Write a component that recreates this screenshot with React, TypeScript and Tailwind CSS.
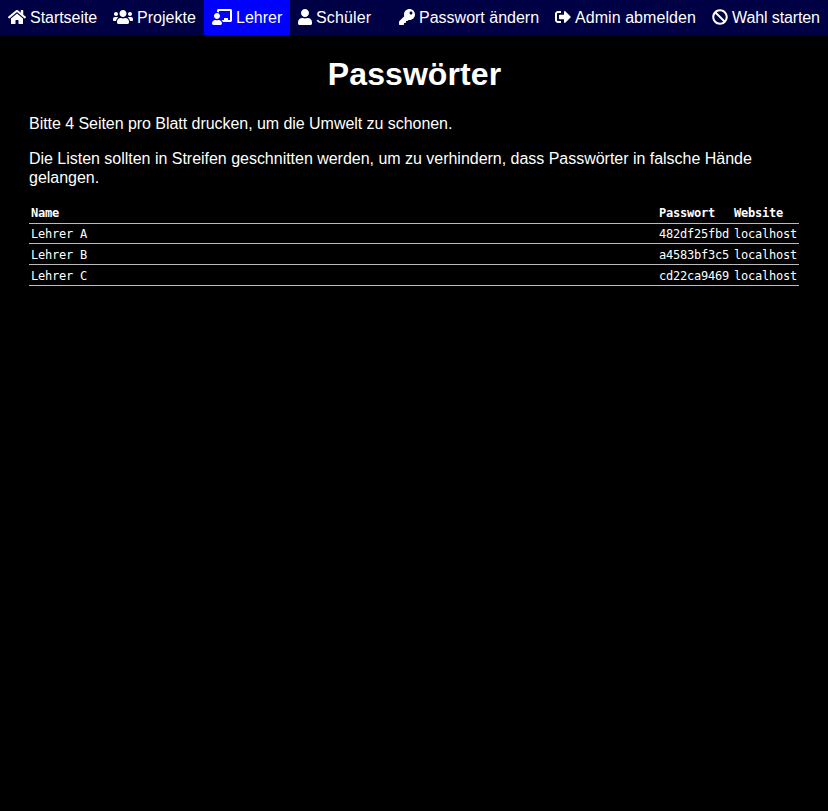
import React from "react";
import { FaHome, FaUsers, FaChalkboardTeacher, FaUser, FaKey, FaSignOutAlt, FaBan } from "react-icons/fa";

type Item = { label: string; icon: React.ReactNode; size: string; active?: boolean };

const left: Item[] = [
  { label: "Startseite", size: "w-[105px] tracking-[-0.04px]", icon: <FaHome className="mb-px block h-4 w-[18px] shrink-0" /> },
  { label: "Projekte", size: "w-[99px] tracking-[0.03px]", icon: <FaUsers className="mb-px block h-4 w-5 shrink-0" /> },
  { label: "Lehrer", size: "w-[86px]", icon: <FaChalkboardTeacher className="mb-px block h-4 w-5 shrink-0" />, active: true },
  { label: "Schüler", size: "w-[89px] tracking-[0.14px]", icon: <FaUser className="mb-px block h-4 w-[14px] shrink-0" /> },
];

const right: Item[] = [
  { label: "Passwort ändern", size: "w-[156px]", icon: <FaKey className="mb-px block h-4 w-4 shrink-0" /> },
  { label: "Admin abmelden", size: "w-[157px] tracking-[0.06px]", icon: <FaSignOutAlt className="mb-px block h-4 w-4 shrink-0" /> },
  { label: "Wahl starten", size: "w-[124px] tracking-[-0.11px]", icon: <FaBan className="mb-px block h-4 w-4 shrink-0" /> },
];

const rows = [
  ["Lehrer A", "482df25fbd", "localhost"],
  ["Lehrer B", "a4583bf3c5", "localhost"],
  ["Lehrer C", "cd22ca9469", "localhost"],
];

function NavItem({ label, icon, size, active }: Item) {
  return (
    <a className={`flex h-[35px] items-center gap-1 px-2 whitespace-nowrap ${size} ${active ? "bg-[#0000ff]" : ""}`}>
      {icon}
      <span>{label}</span>
    </a>
  );
}

export default function App() {
  return (
    <div className="min-h-screen bg-black font-['Liberation_Sans',Arial,sans-serif] text-base leading-[19px] text-white">
      <nav className="flex h-[35px] justify-between bg-[#000044]">
        <div className="flex">{left.map((i) => <NavItem key={i.label} {...i} />)}</div>
        <div className="flex">{right.map((i) => <NavItem key={i.label} {...i} />)}</div>
      </nav>
      <main className="px-[29px] pt-[21px]">
        <h1 className="mb-[21px] pl-px text-center text-[32px] leading-[37px] font-bold tracking-[0.08px]">Passwörter</h1>
        <p className="mb-4 tracking-[-0.045px]">Bitte 4 Seiten pro Blatt drucken, um die Umwelt zu schonen.</p>
        <p className="mb-4 tracking-[-0.02px]">
          Die Listen sollten in Streifen geschnitten werden, um zu verhindern, dass Passwörter in falsche Hände gelangen.
        </p>
        <div className="font-['DejaVu_Sans_Mono',monospace] text-[12px] leading-4 tracking-[-0.224px]">
          <div className="grid h-[21px] grid-cols-[1fr_75px_67px] border-b border-[#bbbbbb] pt-0.5 font-bold">
            <span className="px-0.5">Name</span>
            <span className="px-0.5">Passwort</span>
            <span className="px-0.5">Website</span>
          </div>
          {rows.map((r, i) => (
            <div
              key={r[0]}
              className={`grid grid-cols-[1fr_75px_67px] border-b border-[#bbbbbb] ${i === 0 ? "h-5 pt-0.5" : "h-[21px] pt-[3px]"}`}
            >
              <span className="px-0.5">{r[0]}</span>
              <span className="px-0.5">{r[1]}</span>
              <span className="px-0.5">{r[2]}</span>
            </div>
          ))}
        </div>
      </main>
    </div>
  );
}
